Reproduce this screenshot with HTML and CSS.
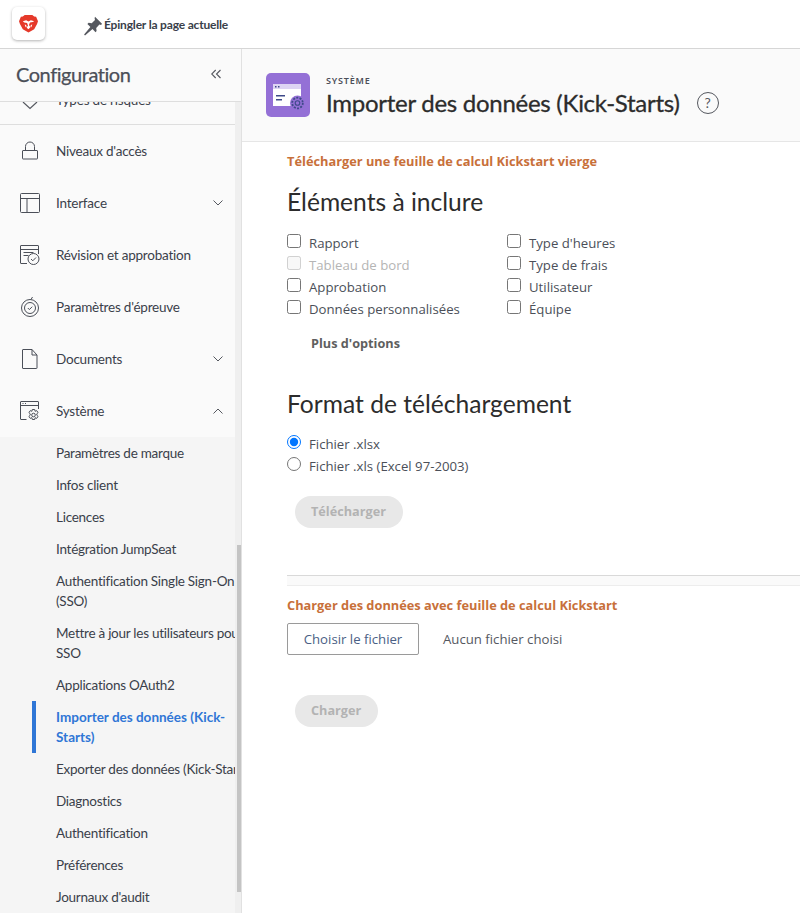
FILE: index.html
```html
<!DOCTYPE html>
<html lang="fr">
<head>
<meta charset="utf-8">
<title>Importer des données (Kick-Starts)</title>
<link rel="stylesheet" href="styles.css">
</head>
<body>
<header class="topbar">
  <div class="logo-tile">
    <svg class="logo" viewBox="0 0 20 20" width="19" height="19"><path fill="#e5392a" d="M6 1h8l2 1.500 2 .3 2 4.700-1 3-3 5.500-6 3.500-6-3.500-3-5.500-1-3 2-4.700 2-.3z"/><path fill="#fff" d="M4 7.500l3.500-1L10 8l2.500-1.500 3.500 1-1.500 1-3 .5-1 2.500 1.500 2.500L10 16l-2-1.500L9.500 12l-1-2.500-3-.5z"/><path fill="#fff" d="M6 11l1.500.5.500 2-1 .5zM14 11l-1.500.5-.5 2 1 .5z"/></svg>
  </div>
  <div class="pin-action">
    <svg class="pin" viewBox="0 0 20 20" width="20" height="20"><path fill="#55585f" d="M12 .8l7 7-.9 1.100-1.700-.4-3.200 3.400.4 3.100-1.100 1.200-3-3.100-7.500 6.300-.9-.9 6.300-7.600-3-3 1.200-1.100 3.100.4 3.300-3.200-.4-1.700z"/></svg>
    <span class="pin-label">Épingler la page actuelle</span>
  </div>
</header>
<div class="shell">
  <aside class="sidebar">
    <div class="side-head">
      <h2 class="side-title">Configuration</h2>
      <svg class="collapse" viewBox="0 0 10 10" width="10" height="10"><path d="M4.700 1 .7 5l4 4M9.500 1l-4 4 4 4" fill="none" stroke="#55585f" stroke-width="1.100"/></svg>
    </div>
    <div class="side-scroll">
      <nav class="side-nav">
        <div class="clip-row">
          <svg class="clip-chev" viewBox="0 0 16 8" width="16" height="8"><path d="M1 0l7 6.500L15 0" fill="none" stroke="#55585f" stroke-width="1.200"/></svg>
          <span class="clip-text">Types de risques</span>
        </div>
        <a class="nav-row">
          <svg class="nav-icon" viewBox="0 0 20 20"><path d="M3 9.500h14a.5.500 0 0 1 .5.500v7.500a.5.500 0 0 1-.5.500H3a.5.500 0 0 1-.5-.5V10a.5.500 0 0 1 .5-.5zM5.500 9.500V5.500a4.500 4.500 0 0 1 9 0v4"/></svg>
          <span class="nav-text">Niveaux d'accès</span>
        </a>
        <a class="nav-row">
          <svg class="nav-icon" viewBox="0 0 20 20"><rect x="0.500" y="0.500" width="19" height="19" rx="1"/><path d="M.5 5.500h19M7 5.500v14"/></svg>
          <span class="nav-text">Interface</span>
          <svg class="chev" viewBox="0 0 10 6" width="10" height="6"><path d="M.5.500 5 5 9.500.5"/></svg>
        </a>
        <a class="nav-row">
          <svg class="nav-icon" viewBox="0 0 20 20"><path d="M7 18.500H1a.5.500 0 0 1-.5-.5V1A.5.500 0 0 1 1 .5h17a.5.500 0 0 1 .5.500v8M.5 4.500h18M3.500 7.500h10M3.500 10.500h5"/><circle cx="13.500" cy="14" r="5.500"/><path d="M11 14l1.800 1.800 3.200-3.300"/></svg>
          <span class="nav-text">Révision et approbation</span>
        </a>
        <a class="nav-row">
          <svg class="nav-icon" viewBox="0 0 20 20"><circle cx="10" cy="11" r="8.500"/><circle cx="10" cy="11" r="5.500"/><path d="M7.800 11l1.600 1.600 2.800-2.900M11 2.500 12.500 0"/></svg>
          <span class="nav-text">Paramètres d'épreuve</span>
        </a>
        <a class="nav-row">
          <svg class="nav-icon" viewBox="0 0 20 20"><path d="M3 .5h9l5 5.500v13a.5.500 0 0 1-.5.500H3a.5.500 0 0 1-.5-.5V1A.5.500 0 0 1 3 .5zM12 .5V6h5"/></svg>
          <span class="nav-text">Documents</span>
          <svg class="chev" viewBox="0 0 10 6" width="10" height="6"><path d="M.5.500 5 5 9.500.5"/></svg>
        </a>
        <a class="nav-row">
          <svg class="nav-icon" viewBox="0 0 20 20"><path d="M6.500 18.500H1a.5.500 0 0 1-.5-.5V1A.5.500 0 0 1 1 .5h17a.5.500 0 0 1 .5.500v7M.5 4.500h18M2.500 2.500h1M5 2.500h1"/><circle cx="13.500" cy="14" r="1.800"/><path d="M12.300 8.500h2.400l.4 1.800 1.600-.7 1.400 2-1.300 1.200v1.400l1.300 1.200-1.400 2-1.600-.7-.4 1.800h-2.400l-.4-1.800-1.600.7-1.400-2 1.300-1.200v-1.400l-1.300-1.200 1.400-2 1.600.7z"/></svg>
          <span class="nav-text">Système</span>
          <svg class="chev" viewBox="0 0 10 6" width="10" height="6"><path d="M.5 5.500 5 1l4.500 4.500"/></svg>
        </a>
        <ul class="sub-list">
          <li class="sub-item">Paramètres de marque</li>
          <li class="sub-item">Infos client</li>
          <li class="sub-item">Licences</li>
          <li class="sub-item">Intégration JumpSeat</li>
          <li class="sub-item">Authentification Single Sign-On<br>(SSO)</li>
          <li class="sub-item">Mettre à jour les utilisateurs pour<br>SSO</li>
          <li class="sub-item">Applications OAuth2</li>
          <li class="sub-item sub-active">Importer des données (Kick-<br>Starts)</li>
          <li class="sub-item">Exporter des données (Kick-Starts)</li>
          <li class="sub-item">Diagnostics</li>
          <li class="sub-item">Authentification</li>
          <li class="sub-item">Préférences</li>
          <li class="sub-item">Journaux d'audit</li>
        </ul>
      </nav>
      <div class="scroll-thumb"></div>
    </div>
  </aside>
  <main class="main">
    <div class="page-head">
      <div class="app-tile">
        <svg viewBox="0 0 32 26" width="32" height="26"><rect x="0" y="0" width="28" height="5" fill="#ddd4f3"/><rect x="0" y="5" width="28" height="17" fill="#fff"/><rect x="2" y="2" width="1.500" height="1.500" fill="#3f4a8a"/><rect x="5" y="2" width="1.500" height="1.500" fill="#3f4a8a"/><rect x="3" y="11" width="9" height="1.500" fill="#3f4a8a"/><rect x="3" y="15" width="6" height="1.500" fill="#3f4a8a"/><circle cx="24.500" cy="19" r="7.500" fill="#9470d6"/><circle cx="24.500" cy="19" r="2.300" fill="none" stroke="#3f4a8a" stroke-width="1.100"/><circle cx="24.500" cy="19" r="5.300" fill="none" stroke="#3f4a8a" stroke-width="1.800" stroke-dasharray="2 1.300"/></svg>
      </div>
      <div class="head-text">
        <div class="eyebrow">SYSTÈME</div>
        <div class="title-row">
          <h1 class="page-title">Importer des données (Kick-Starts)</h1>
          <span class="help">?</span>
        </div>
      </div>
    </div>
    <div class="content">
      <a class="orange-link">Télécharger une feuille de calcul Kickstart vierge</a>
      <h2 class="section-title first">Éléments à inclure</h2>
      <div class="check-grid">
        <label class="opt"><input type="checkbox"><span>Rapport</span></label>
        <label class="opt"><input type="checkbox"><span>Type d'heures</span></label>
        <label class="opt opt-off"><input type="checkbox" disabled><span>Tableau de bord</span></label>
        <label class="opt"><input type="checkbox"><span>Type de frais</span></label>
        <label class="opt"><input type="checkbox"><span>Approbation</span></label>
        <label class="opt"><input type="checkbox"><span>Utilisateur</span></label>
        <label class="opt"><input type="checkbox"><span>Données personnalisées</span></label>
        <label class="opt"><input type="checkbox"><span>Équipe</span></label>
      </div>
      <a class="more">Plus d'options</a>
      <h2 class="section-title second">Format de téléchargement</h2>
      <div class="radio-list">
        <label class="opt"><input type="radio" name="fmt" checked><span>Fichier .xlsx</span></label>
        <label class="opt"><input type="radio" name="fmt"><span>Fichier .xls (Excel 97-2003)</span></label>
      </div>
      <div class="pill pill-dl">Télécharger</div>
      <div class="divider"></div>
      <a class="orange-link upload">Charger des données avec feuille de calcul Kickstart</a>
      <div class="file-row">
        <span class="file-btn">Choisir le fichier</span>
        <span class="file-none">Aucun fichier choisi</span>
      </div>
      <div class="pill pill-up">Charger</div>
    </div>
  </main>
</div>
</body>
</html>
```
FILE: styles.css
```css
* { box-sizing: border-box; }
html, body { margin: 0; height: 100%; overflow: hidden; }
body { background: #fff; color: #2c2c2c; font-family: "Lato", sans-serif; }

.topbar { height: 49px; display: flex; align-items: center; border-bottom: 1px solid #d6d6d6; background: #fff; }
.logo-tile { width: 33px; height: 33px; margin: -2px 0 0 12px; border-radius: 5px; background: #fff; box-shadow: 0 1px 3px rgba(0,0,0,.3); display: flex; align-items: center; justify-content: center; }
.pin-action { display: flex; align-items: center; margin-left: 38px; }
.pin { margin: 4px 1px 0 0; }
.pin-label { font-size: 12px; font-weight: 700; color: #3a3f4a; letter-spacing: -.18px; }

.shell { display: flex; height: 864px; }
.sidebar { width: 242px; flex: none; background: #f5f5f5; border-right: 1px solid #e1e1e1; display: flex; flex-direction: column; overflow: hidden; }
.side-head { height: 53px; flex: none; display: flex; align-items: center; justify-content: space-between; padding: 0 20px 2px 16px; background: #fafafa; border-bottom: 1px solid #dedede; }
.side-title { margin: 0; font-size: 20px; font-weight: 400; letter-spacing: -.45px; color: #4b4f58; -webkit-text-stroke: .25px #4b4f58; }
.side-scroll { position: relative; flex: 1; overflow: hidden; background: #efefef; }
.side-nav { width: 235px; height: 100%; overflow: hidden; background: #f5f5f5; }
.clip-row { height: 23px; position: relative; background: #fafafa; border-bottom: 1px solid #dedede; overflow: hidden; }
.clip-chev { position: absolute; left: 22px; top: 0; }
.clip-text { position: absolute; left: 56px; top: -10px; font-size: 13.500px; letter-spacing: -.2px; color: #3a3f4a; }
.nav-row { height: 52px; display: flex; align-items: center; padding: 0 12px 1px 20px; background: #fafafa; }
.nav-icon { width: 20px; height: 20px; flex: none; fill: none; stroke: #4b4f58; stroke-width: 1; }
.nav-text { flex: 1; margin-left: 16px; font-size: 13.500px; letter-spacing: -.22px; color: #3a3f4a; white-space: nowrap; }
.chev { fill: none; stroke: #55585f; stroke-width: 1; }
.sub-list { list-style: none; margin: 0; padding: 0; }
.sub-item { padding: 6px 0 6px 56px; font-size: 13.500px; letter-spacing: -.26px; line-height: 20px; color: #3a3f4a; white-space: nowrap; }
.sub-active { position: relative; color: #2f76d6; font-weight: 700; letter-spacing: 0; }
.sub-active::before { content: ""; position: absolute; left: 32px; top: 0; bottom: 0; width: 4px; background: #2f76d6; }
.scroll-thumb { position: absolute; left: 237px; top: 443px; width: 4px; height: 347px; background: #c4c4c4; }

.main { flex: 1; min-width: 0; }
.page-head { height: 93px; display: flex; align-items: center; padding: 0 0 0 24px; background: #fafafa; border-bottom: 1px solid #e6e6e6; }
.app-tile { width: 44px; height: 44px; border-radius: 5px; background: #9470d6; display: flex; align-items: center; justify-content: center; padding: 3px 0 0 1px; }
.head-text { margin: 2px 0 0 16px; }
.eyebrow { font-family: "Noto Sans", sans-serif; font-size: 9px; font-weight: 600; letter-spacing: .8px; color: #4b4f58; line-height: 12px; padding-top: 1px; height: 13px; }
.title-row { display: flex; align-items: center; margin-top: 1px; }
.page-title { margin: 0; font-size: 24px; font-weight: 400; letter-spacing: -.27px; line-height: 30px; color: #2c2c2c; -webkit-text-stroke: .3px #2c2c2c; }
.help { width: 22px; height: 22px; margin-left: 17px; border: 1px solid #55585f; border-radius: 50%; font-size: 14px; line-height: 20px; text-align: center; color: #55585f; }

.content { padding: 11px 0 0 45px; font-family: "Open Sans", sans-serif; }
.orange-link { display: block; font-size: 12.800px; font-weight: 700; line-height: 16px; color: #c8703a; }
.section-title { margin: 0; font-family: "Lato", sans-serif; font-size: 24.600px; font-weight: 400; line-height: 30px; color: #2c2c2c; }
.section-title.first { margin-top: 18px; }
.section-title.second { margin-top: 36px; }
.check-grid { display: grid; grid-template-columns: 220px 220px; margin-top: 15px; }
.opt { display: flex; align-items: center; height: 22px; font-size: 13.200px; color: #4b4f58; }
.opt input { margin: -4px 8px 0 0; width: 14px; height: 14px; flex: none; }
.opt-off { color: #b5b5b5; }
.more { display: block; margin: 13px 0 0 24px; font-size: 12.700px; font-weight: 700; line-height: 20px; color: #5f5f5f; }
.radio-list { margin-top: 14px; }
.pill { display: inline-block; height: 32px; padding: 0 16px; border-radius: 16px; background: #e8e8e8; color: #b3b3b3; font-size: 12.700px; font-weight: 700; line-height: 31px; margin-left: 8px; }
.pill-dl { display: block; width: 108px; margin-top: 19px; }
.divider { height: 11px; margin-top: 47px; border-top: 1px solid #d9d9d9; border-bottom: 1px solid #ededed; background: #fafafa; }
.upload { margin-top: 11px; }
.file-row { display: flex; align-items: center; margin-top: 10px; }
.file-btn { width: 132px; height: 32px; border: 1px solid #9a9a9a; border-radius: 2px; text-align: center; font-size: 13.200px; line-height: 30px; color: #4a6085; }
.file-none { margin-left: 24px; font-size: 13.200px; color: #55585f; }
.pill-up { display: block; width: 83px; margin-top: 40px; }
```
